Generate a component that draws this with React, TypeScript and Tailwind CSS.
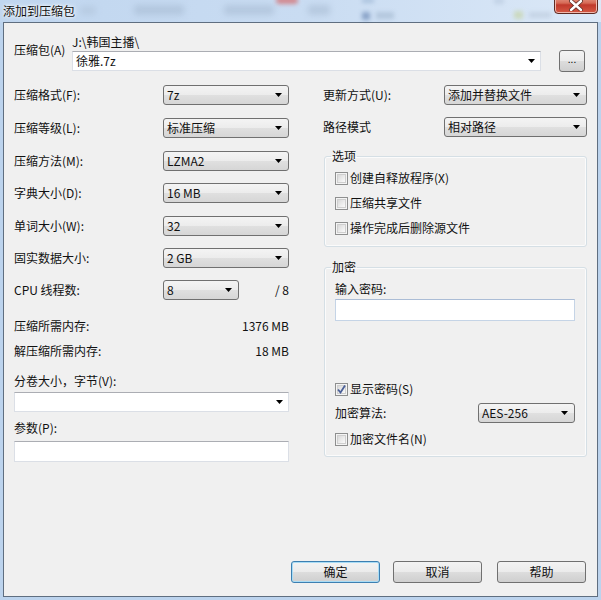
import React from "react";

const font = "font-['Noto_Sans_CJK_SC','Noto_Sans_CJK_JP',sans-serif]";

function Arrow() {
  return (
    <svg width="7" height="4" viewBox="0 0 7 4" className="shrink-0">
      <path d="M0 0h7L3.5 4z" fill="#000" />
    </svg>
  );
}

function Combo({ value, className }: { value: string; className: string }) {
  return (
    <div
      className={`flex h-[20px] items-center justify-between rounded-[3px] border border-[#707070] bg-[linear-gradient(#f4f4f4,#ececec_50%,#e0e0e0_50%,#d6d6d6)] pl-[3px] pr-[6px] ${className}`}
    >
      <span className="leading-[16px]">{value}</span>
      <Arrow />
    </div>
  );
}

function Check({ checked, label }: { checked?: boolean; label: string }) {
  return (
    <div className="flex h-[16px] items-center">
      <div className="flex h-[13px] w-[13px] items-center justify-center border border-[#8e8f8f] bg-[#f4f4f4]">
        <div className="relative h-[9px] w-[9px] border border-[#cfcfcf] bg-linear-to-br from-[#d9d9d9] to-[#fbfbfb]">
          {checked && (
            <svg width="11" height="11" viewBox="0 0 11 11" className="absolute left-[-2px] top-[-2px]">
              <path d="M2 5.5 L4.5 8.5 L9 1.5" fill="none" stroke="#4a5f97" strokeWidth="1.8" />
            </svg>
          )}
        </div>
      </div>
      <span className="ml-[2px]">{label}</span>
    </div>
  );
}

function Btn({ label, def, className }: { label: string; def?: boolean; className: string }) {
  return (
    <div
      className={`flex h-[22px] w-[89px] items-center justify-center rounded-[3px] border bg-[linear-gradient(#f3f3f3,#ebebeb_50%,#dddddd_50%,#cfcfcf)] ${
        def ? "border-[#3c7fb1] shadow-[inset_0_0_0_1px_#a9dcf5]" : "border-[#707070]"
      } ${className}`}
    >
      {label}
    </div>
  );
}

export default function App() {
  return (
    <div className={`relative h-[600px] w-[601px] overflow-hidden bg-[#bcd3ed] text-[12px] leading-[16px] text-[#111] ${font}`}>
      {/* Title bar */}
      <div className="relative flex h-[22px] items-start bg-linear-to-r from-[#c0d6ef] via-[#c9dcf2] to-[#dbe8f7]">
        <div className="absolute left-[80px] top-[6px] h-[9px] w-[16px] bg-[#a8bbd0] opacity-40 blur-[3px]" />
        <div className="absolute left-[134px] top-[5px] h-[10px] w-[50px] bg-[#98acc3] opacity-40 blur-[3px]" />
        <div className="absolute left-[224px] top-[5px] h-[10px] w-[50px] bg-[#98acc3] opacity-40 blur-[3px]" />
        <div className="absolute left-[276px] top-[-3px] h-[7px] w-[22px] rounded-full bg-[#d9534f] opacity-60 blur-[2px]" />
        <div className="absolute left-[308px] top-[5px] h-[10px] w-[22px] bg-[#98acc3] opacity-40 blur-[3px]" />
        <div className="absolute left-[362px] top-[-2px] h-[5px] w-[12px] bg-[#7d9cc0] opacity-40 blur-[2px]" />
        <div className="absolute left-[362px] top-[12px] h-[8px] w-[8px] bg-[#4a6c9f] opacity-50 blur-[2px]" />
        <div className="absolute left-[376px] top-[12px] h-[7px] w-[18px] bg-[#8ea4bd] opacity-40 blur-[2px]" />
        <div className="absolute left-[494px] top-[-2px] h-[6px] w-[10px] bg-[#98acc3] opacity-30 blur-[2px]" />
        <div className="absolute left-[514px] top-[11px] h-[8px] w-[9px] bg-[#c4d29a] opacity-60 blur-[2px]" />
        <div className="absolute left-[529px] top-[12px] h-[6px] w-[22px] bg-[#a9b9cc] opacity-40 blur-[2px]" />
        <div className="relative pl-[3px] pt-[3px] [text-shadow:0_0_5px_#fff,0_0_3px_#fff]">添加到压缩包</div>
        <div className="absolute right-[3px] top-[-6px] flex h-[20px] w-[44px] items-end justify-center rounded-[4px] border border-[#5e2a22] bg-[linear-gradient(#e9a99c,#d66a55_45%,#c0392b_55%,#d55a45)] pb-[2px] shadow-[inset_0_0_0_1px_#f0b8ad]">
          <svg width="14" height="11" viewBox="0 0 14 11">
            <path d="M2 1 L12 10 M12 1 L2 10" stroke="#5a2a22" strokeWidth="4" strokeLinecap="round" />
            <path d="M2 1 L12 10 M12 1 L2 10" stroke="#fff" strokeWidth="2.4" strokeLinecap="round" />
          </svg>
        </div>
      </div>

      {/* Client area */}
      <div className="mx-[3px] flex h-[575px] flex-col border border-[#5f6e80] bg-[#f0f0f0] pl-[10px] pr-[9px] pt-[11px]">
        {/* Archive row */}
        <div className="flex items-start">
          <div className="mt-[8px] w-[58px]">压缩包(A)</div>
          <div className="flex w-[469px] flex-col">
            <div>{"J:\\韩国主播\\"}</div>
            <div className="mt-[1px] flex h-[20px] items-center justify-between border border-[#dbdfe6] border-t-[#abadb3] bg-white pl-[3px] pr-[5px]">
              <span>徐雅.7z</span>
              <Arrow />
            </div>
          </div>
          <div className="ml-[18px] mt-[16px] flex h-[22px] w-[26px] items-center justify-center rounded-[3px] border border-[#707070] bg-[linear-gradient(#f3f3f3,#ebebeb_50%,#dddddd_50%,#cfcfcf)] pb-[4px] text-[10px]">
            ...
          </div>
        </div>

        {/* Columns */}
        <div className="mt-[13px] flex">
          {/* Left */}
          <div className="flex w-[275px] flex-col">
            <div className="flex h-[20px] items-center">
              <span className="w-[149px]">压缩格式(F):</span>
              <Combo value="7z" className="w-[126px]" />
            </div>
            <div className="mt-[13px] flex h-[20px] items-center">
              <span className="w-[149px]">压缩等级(L):</span>
              <Combo value="标准压缩" className="w-[126px]" />
            </div>
            <div className="mt-[13px] flex h-[20px] items-center">
              <span className="w-[149px]">压缩方法(M):</span>
              <Combo value="LZMA2" className="w-[126px]" />
            </div>
            <div className="mt-[12px] flex h-[20px] items-center">
              <span className="w-[149px]">字典大小(D):</span>
              <Combo value="16 MB" className="w-[126px]" />
            </div>
            <div className="mt-[13px] flex h-[20px] items-center">
              <span className="w-[149px]">单词大小(W):</span>
              <Combo value="32" className="w-[126px]" />
            </div>
            <div className="mt-[12px] flex h-[20px] items-center">
              <span className="w-[149px]">固实数据大小:</span>
              <Combo value="2 GB" className="w-[126px]" />
            </div>
            <div className="mt-[12px] flex h-[20px] items-center">
              <span className="w-[149px]">CPU 线程数:</span>
              <Combo value="8" className="w-[76px]" />
              <span className="flex-1 text-right">/ 8</span>
            </div>
            <div className="mt-[18px] flex justify-between">
              <span>压缩所需内存:</span>
              <span>1376 MB</span>
            </div>
            <div className="mt-[9px] flex justify-between">
              <span>解压缩所需内存:</span>
              <span>18 MB</span>
            </div>
            <div className="mt-[14px]">分卷大小，字节(V):</div>
            <div className="mt-[3px] flex h-[20px] items-center justify-end border border-[#dbdfe6] border-t-[#abadb3] bg-white pr-[5px]">
              <Arrow />
            </div>
            <div className="mt-[8px]">参数(P):</div>
            <div className="mt-[5px] h-[21px] border border-[#dbdfe6] border-t-[#abadb3] bg-white" />
          </div>

          {/* Right */}
          <div className="ml-[34px] flex w-[264px] flex-col">
            <div className="flex h-[20px] items-center">
              <span className="w-[121px]">更新方式(U):</span>
              <Combo value="添加并替换文件" className="w-[143px]" />
            </div>
            <div className="mt-[12px] flex h-[20px] items-center">
              <span className="w-[121px]">路径模式</span>
              <Combo value="相对路径" className="w-[143px]" />
            </div>

            <fieldset className="ml-[1px] mt-[11px] rounded-[3px] border border-[#d5dfe5] pb-[10px] pl-[10px] shadow-[inset_0_0_0_1px_#fbfbfb]">
              <legend className="ml-[-4px] px-[1px]">选项</legend>
              <div className="mt-[6px] flex flex-col gap-[9px]">
                <Check label="创建自释放程序(X)" />
                <Check label="压缩共享文件" />
                <Check label="操作完成后删除源文件" />
              </div>
            </fieldset>

            <fieldset className="ml-[1px] mt-[12px] rounded-[3px] border border-[#d5dfe5] pb-[9px] pl-[10px] pr-[11px] shadow-[inset_0_0_0_1px_#fbfbfb]">
              <legend className="ml-[-4px] px-[1px]">加密</legend>
              <div className="mt-[6px]">输入密码:</div>
              <div className="mt-[2px] h-[22px] w-[240px] border border-[#c5d4e6] border-t-[#abbdd6] bg-white" />
              <div className="mt-[60px]">
                <Check checked label="显示密码(S)" />
              </div>
              <div className="mt-[6px] flex h-[20px] items-center">
                <span className="w-[143px]">加密算法:</span>
                <Combo value="AES-256" className="w-[97px]" />
              </div>
              <div className="mt-[8px]">
                <Check label="加密文件名(N)" />
              </div>
            </fieldset>
          </div>
        </div>

        {/* Buttons */}
        <div className="ml-[277px] mt-auto flex pb-[13px]">
          <Btn label="确定" def className="" />
          <Btn label="取消" className="ml-[13px]" />
          <Btn label="帮助" className="ml-[15px]" />
        </div>
      </div>
    </div>
  );
}
